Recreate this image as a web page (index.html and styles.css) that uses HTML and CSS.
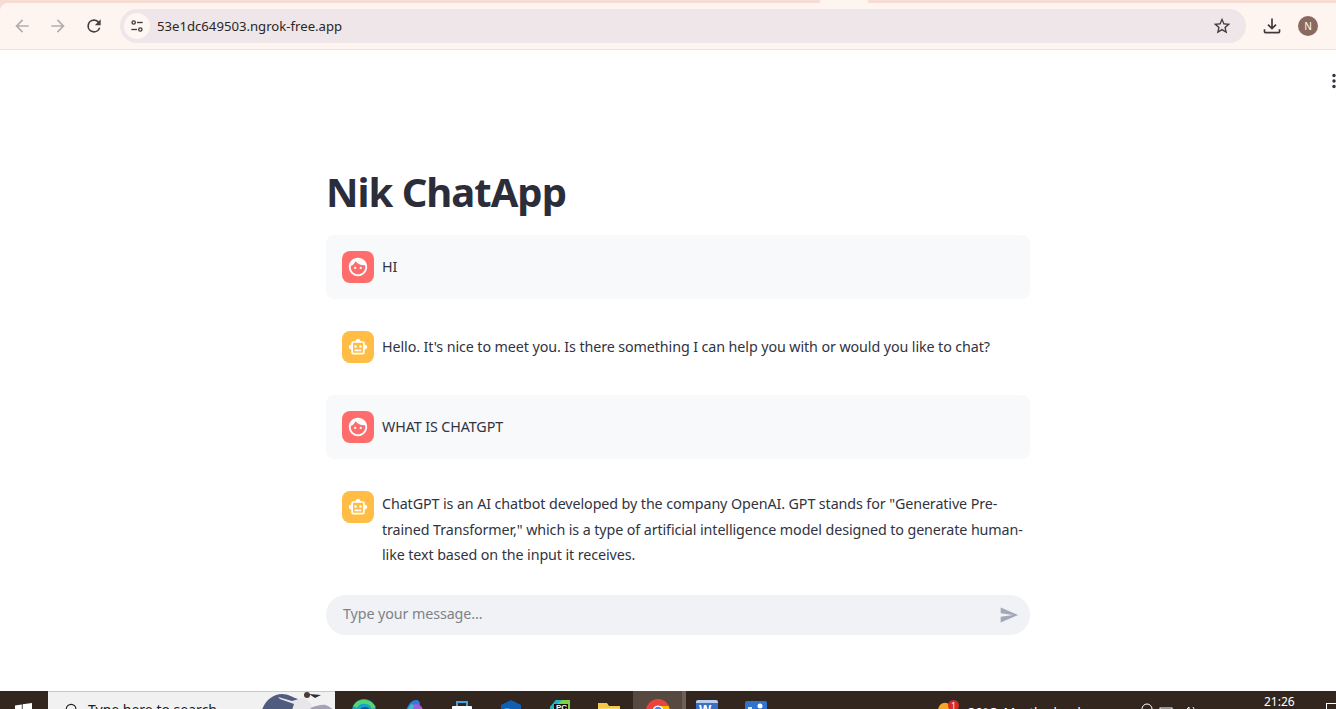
FILE: index.html
```html
<!DOCTYPE html>
<html lang="en">
<head>
<meta charset="utf-8">
<title>Nik ChatApp</title>
<link rel="stylesheet" href="styles.css">
</head>
<body>
<div class="chrome">
<div class="tabstrip"><div class="tab-active"></div></div>
<header class="toolbar">
  <svg class="nav-icon dim" viewBox="0 0 24 24"><path d="M20 11H7.830l5.590-5.590L12 4l-8 8 8 8 1.410-1.410L7.830 13H20z"/></svg>
  <svg class="nav-icon dim" viewBox="0 0 24 24"><path d="M4 11h12.170l-5.590-5.590L12 4l8 8-8 8-1.410-1.410L16.170 13H4z"/></svg>
  <svg class="nav-icon" viewBox="0 0 24 24"><path d="M17.650 6.350A7.960 7.960 0 0 0 12 4a8 8 0 1 0 7.730 10h-2.080A6 6 0 1 1 12 6c1.660 0 3.140.69 4.220 1.780L13 11h7V4z"/></svg>
  <div class="omnibox">
    <span class="site-chip">
      <svg viewBox="0 0 16 16" class="tune"><circle cx="4.200" cy="4" r="1.900"/><path d="M8 4h6.500"/><circle cx="11.800" cy="12" r="1.900"/><path d="M1.500 12H8"/></svg>
    </span>
    <span class="url">53e1dc649503.ngrok-free.app</span>
    <svg class="star" viewBox="0 0 24 24"><path d="M22 9.240l-7.190-.62L12 2 9.190 8.630 2 9.240l5.460 4.730L5.820 21 12 17.270 18.180 21l-1.630-7.030L22 9.240zM12 15.400l-3.760 2.270 1-4.280-3.320-2.880 4.380-.38L12 6.100l1.710 4.040 4.380.38-3.320 2.880 1 4.280L12 15.400z"/></svg>
  </div>
  <svg class="download" viewBox="0 0 24 24"><path d="M12 16.500l-5.500-5.500 1.400-1.400 3.100 3.100V3h2v9.700l3.100-3.100 1.400 1.400zM4 21a2 2 0 0 1-2-2v-3h2v3h16v-3h2v3a2 2 0 0 1-2 2z"/></svg>
  <span class="profile">N</span>
</header>
</div>

<main class="page">
  <svg class="kebab" viewBox="0 0 4 16"><circle cx="2" cy="2.500" r="1.700"/><circle cx="2" cy="8" r="1.700"/><circle cx="2" cy="13.500" r="1.700"/></svg>
  <div class="column">
    <h1 class="title">Nik ChatApp</h1>
    <div class="messages">
      <div class="msg msg-user">
        <span class="avatar avatar-user"><svg viewBox="0 0 24 24"><path d="M9 11.750c-.69 0-1.250.56-1.250 1.250s.56 1.250 1.250 1.250 1.250-.56 1.250-1.250-.56-1.250-1.250-1.250zm6 0c-.69 0-1.250.56-1.250 1.250s.56 1.250 1.250 1.250 1.250-.56 1.250-1.250-.56-1.250-1.250-1.250zM12 2C6.480 2 2 6.480 2 12s4.480 10 10 10 10-4.480 10-10S17.520 2 12 2zm0 18c-4.410 0-8-3.590-8-8 0-.29.02-.58.05-.86 2.360-1.050 4.230-2.980 5.210-5.370C11.070 8.330 14.050 10 17.420 10c.78 0 1.530-.09 2.250-.26.21.71.33 1.470.33 2.260 0 4.410-3.590 8-8 8z"/></svg></span>
        <p class="msg-text">HI</p>
      </div>
      <div class="msg">
        <span class="avatar avatar-bot"><svg viewBox="0 0 24 24"><path d="M20 9V7c0-1.100-.9-2-2-2h-3c0-1.660-1.340-3-3-3S9 3.340 9 5H6c-1.100 0-2 .9-2 2v2c-1.660 0-3 1.340-3 3s1.340 3 3 3v4c0 1.100.9 2 2 2h12c1.100 0 2-.9 2-2v-4c1.660 0 3-1.340 3-3s-1.340-3-3-3zm-2 10H6V7h12v12zm-9-6c-.83 0-1.500-.67-1.500-1.500S8.170 10 9 10s1.500.67 1.500 1.500S9.830 13 9 13zm7.500-1.500c0 .83-.67 1.500-1.500 1.500s-1.500-.67-1.500-1.500.67-1.500 1.500-1.500 1.500.67 1.500 1.500zM8 15h8v2H8v-2z"/></svg></span>
        <p class="msg-text">Hello. It's nice to meet you. Is there something I can help you with or would you like to chat?</p>
      </div>
      <div class="msg msg-user">
        <span class="avatar avatar-user"><svg viewBox="0 0 24 24"><path d="M9 11.750c-.69 0-1.250.56-1.250 1.250s.56 1.250 1.250 1.250 1.250-.56 1.250-1.250-.56-1.250-1.250-1.250zm6 0c-.69 0-1.250.56-1.250 1.250s.56 1.250 1.250 1.250 1.250-.56 1.250-1.250-.56-1.250-1.250-1.250zM12 2C6.480 2 2 6.480 2 12s4.480 10 10 10 10-4.480 10-10S17.520 2 12 2zm0 18c-4.410 0-8-3.590-8-8 0-.29.02-.58.05-.86 2.360-1.050 4.230-2.980 5.210-5.370C11.070 8.330 14.050 10 17.420 10c.78 0 1.530-.09 2.250-.26.21.71.33 1.470.33 2.260 0 4.410-3.590 8-8 8z"/></svg></span>
        <p class="msg-text">WHAT IS CHATGPT</p>
      </div>
      <div class="msg msg-long">
        <span class="avatar avatar-bot"><svg viewBox="0 0 24 24"><path d="M20 9V7c0-1.100-.9-2-2-2h-3c0-1.660-1.340-3-3-3S9 3.340 9 5H6c-1.100 0-2 .9-2 2v2c-1.660 0-3 1.340-3 3s1.340 3 3 3v4c0 1.100.9 2 2 2h12c1.100 0 2-.9 2-2v-4c1.660 0 3-1.340 3-3s-1.340-3-3-3zm-2 10H6V7h12v12zm-9-6c-.83 0-1.500-.67-1.500-1.500S8.170 10 9 10s1.500.67 1.500 1.500S9.830 13 9 13zm7.500-1.500c0 .83-.67 1.500-1.500 1.500s-1.500-.67-1.500-1.500.67-1.500 1.500-1.500 1.500.67 1.500 1.500zM8 15h8v2H8v-2z"/></svg></span>
        <p class="msg-text">ChatGPT is an AI chatbot developed by the company OpenAI. GPT stands for "Generative Pre-trained Transformer," which is a type of artificial intelligence model designed to generate human-like text based on the input it receives.</p>
      </div>
    </div>
    <div class="chat-input">
      <span class="placeholder">Type your message...</span>
      <svg class="send" viewBox="0 0 24 24"><path d="M2.010 21L23 12 2.010 3 2 10l15 2-15 2z"/></svg>
    </div>
  </div>
</main>

<footer class="taskbar">
  <svg class="win" viewBox="0 0 20 20"><path d="M0 3l8-1.200V9.500H0zM9 1.600L20 0v9.500H9zM0 10.500h8v7.700L0 17zM9 10.500h11V20L9 18.400z"/></svg>
  <div class="search">
    <svg class="lens" viewBox="0 0 16 16"><circle cx="7" cy="7" r="5.500"/><path d="M3 11.500L.8 15"/></svg>
    <span class="search-text">Type here to search</span>
    <svg class="search-art" viewBox="0 0 72 18"><path d="M0 18C3 8 12 2 20 2c6 0 10 3 16 5l6 11z" fill="#4f5c80"/><path d="M40 18C50 16 60 10 66 14l6 4z" fill="#a5a2b8"/><path d="M16 5l14 4 10-3 4 1 6 6-2 5H30l2-6-14-5z" fill="#e9e6ea"/><circle cx="45" cy="3" r="3" fill="#4a3a38"/><path d="M47 2l12 1-6 3z" fill="#2e2a33"/></svg>
  </div>
  <div class="apps">
    <span class="app"><svg viewBox="0 0 24 24"><circle cx="12" cy="12" r="12" fill="#1aa3c8"/><circle cx="13" cy="15" r="7" fill="#0c5aa6"/><path d="M3 8C7 1 18 1 22 9" stroke="#58d66c" stroke-width="4" fill="none"/></svg></span>
    <span class="app"><svg viewBox="0 0 24 24"><path d="M4 20C4 8 10 1 15 1c3 0 4 2 4 5l-4 4z" fill="#2a7de1"/><circle cx="15" cy="12" r="7" fill="#a55cd6"/><path d="M4 14c4 0 6-6 8-8" stroke="#35c0c5" stroke-width="4" fill="none"/></svg></span>
    <span class="app app-low"><svg viewBox="0 0 24 24"><path d="M7 6V2h10v4" stroke="#3ea6e0" stroke-width="2" fill="none"/><rect x="2" y="6" width="20" height="18" rx="1" fill="#fff"/><rect x="6" y="11" width="5" height="5" fill="#2f7fd6"/></svg></span>
    <span class="app app-low"><svg viewBox="0 0 24 24"><path d="M12 0l10 5v14H2V5z" fill="#0f5fb5"/><circle cx="8" cy="13" r="5" fill="#38a4e8"/></svg></span>
    <span class="app"><svg viewBox="0 0 24 24"><path d="M4 6L8 1h14v22H2V8z" fill="#7bd14a"/><path d="M2 24V8l6-7h6L2 12z" fill="#1db6c9"/><rect x="6" y="5" width="14" height="16" fill="#111"/><text x="8" y="11" class="mini">PC</text></svg></span>
    <span class="app app-lower"><svg viewBox="0 0 24 24"><path d="M1 1h9l2 3h11v20H1z" fill="#f6c744"/><rect x="1" y="6" width="22" height="18" fill="#fbd766"/></svg></span>
    <span class="app app-active"><svg viewBox="0 0 24 24"><circle cx="12" cy="12" r="12" fill="#e8453c"/><path d="M1.500 12A12 12 0 0 0 12 24L18 12z" fill="#34a853"/><path d="M12 24A12 12 0 0 0 22.500 7H12l6 6z" fill="#fbbc05"/><circle cx="12" cy="12" r="5.500" fill="#fff"/><circle cx="12" cy="12" r="4.200" fill="#4285f4"/></svg></span>
    <span class="app"><svg viewBox="0 0 24 24"><rect x="1" y="1" width="22" height="22" rx="2" fill="#b9cdf0"/><rect x="1" y="4" width="22" height="20" fill="#3a6fc4"/><text x="4" y="15" class="mini-w">W</text></svg></span>
    <span class="app app-low"><svg viewBox="0 0 24 24"><rect x="1" y="1" width="22" height="22" rx="2" fill="#2f73d1"/><circle cx="16" cy="6" r="2.500" fill="#fff"/><rect x="4" y="7" width="4" height="2" fill="#d8e6fa"/></svg></span>
  </div>
  <div class="tray">
    <span class="weather">
      <svg class="sun" viewBox="0 0 24 24"><circle cx="12" cy="14" r="9" fill="#f5a623"/><circle cx="19" cy="20" r="6" fill="#8b9fc0"/></svg>
      <span class="badge">1</span>
    </span>
    <span class="weather-text">30°C&nbsp;&nbsp;Mostly cloudy</span>
    <svg class="tray-icon chevron" viewBox="0 0 14 14"><path d="M3 7l4-4 4 4"/></svg>
    <svg class="tray-icon network" viewBox="0 0 14 14"><circle cx="7" cy="7" r="5"/><path d="M3 12h8"/></svg>
    <svg class="tray-icon battery" viewBox="0 0 14 14"><rect x="1" y="1" width="12" height="9"/></svg>
    <svg class="tray-icon volume" viewBox="0 0 16 14"><path d="M1 6h3l4-4v12M10 4c1 2 1 4 0 6M12 2c2 3 2 7 0 10"/></svg>
    <span class="lang">ENG</span>
    <span class="clock">21:26</span>
    <span class="notify"></span>
  </div>
</footer>
</body>
</html>
```
FILE: styles.css
```css
* { box-sizing: border-box; }
html, body { height: 100%; }
body {
  margin: 0;
  height: 709px;
  overflow: hidden;
  display: flex;
  flex-direction: column;
  background: #fff;
  font-family: "Noto Sans", "Open Sans", sans-serif;
  color: #31333f;
}

/* Browser chrome */
.chrome { flex: none; background: #f6dcd3; }
.tabstrip { height: 3px; position: relative; }
.tab-active {
  position: absolute;
  left: 820px;
  top: 0;
  width: 48px;
  height: 3px;
  background: #fef5f0;
}
.toolbar {
  height: 47px;
  display: flex;
  align-items: flex-start;
  background: #fef5f0;
  border-bottom: 1px solid #e9e3df;
  border-top-left-radius: 8px;
  padding: 6px 0 0 12px;
}
.nav-icon { width: 20px; height: 20px; margin: 7px 16px 0 0; fill: #43403f; flex: none; }
.nav-icon.dim { fill: #b1aeac; }
.omnibox {
  width: 1126px;
  height: 34px;
  flex: none;
  border-radius: 17px;
  background: #eee6e8;
  display: flex;
  align-items: center;
  padding: 0 14px 0 4px;
}
.site-chip {
  width: 26px;
  height: 26px;
  border-radius: 50%;
  background: #fdf6f3;
  display: flex;
  align-items: center;
  justify-content: center;
  flex: none;
}
.tune { width: 14px; height: 14px; fill: none; stroke: #3d3a3a; stroke-width: 1.500; }
.url {
  margin-left: 7px;
  flex: 1;
  font-family: "Noto Sans", sans-serif;
  font-size: 13.150px;
  color: #2a2727;
}
.star { width: 20px; height: 20px; fill: #3f3b3b; flex: none; }
.download { width: 20px; height: 20px; margin: 7px 0 0 16px; fill: #43393a; flex: none; }
.profile {
  width: 20px;
  height: 20px;
  margin: 7px 0 0 16px;
  border-radius: 50%;
  background: #8a6a5e;
  color: #fff;
  font-family: "Liberation Sans", sans-serif;
  font-size: 10px;
  display: flex;
  align-items: center;
  justify-content: center;
  flex: none;
}

/* Page */
.page {
  flex: 1;
  position: relative;
  min-height: 0;
  overflow: hidden;
  padding: 0 306px 0 326px;
}
.kebab { position: absolute; right: 0; top: 23px; width: 4px; height: 16px; fill: #31333f; }
.column { display: flex; flex-direction: column; width: 704px; }
.title {
  margin: 113px 0 14px 0;
  font-size: 40px;
  line-height: 58px;
  font-weight: 700;
  letter-spacing: -1px;
  color: #2b2d3a;
}
.messages { display: flex; flex-direction: column; gap: 16px; }
.msg {
  display: flex;
  gap: 8px;
  padding: 16px 4px 16px 16px;
  min-height: 64px;
  border-radius: 8px;
}
.msg-long { padding-bottom: 12px; }
.msg-user { background: #f8f9fb; }
.avatar {
  width: 32px;
  height: 32px;
  border-radius: 8px;
  display: flex;
  align-items: center;
  justify-content: center;
  flex: none;
}
.avatar svg { width: 20px; height: 20px; fill: #fff; }
.avatar-user { background: #ff6c6c; }
.avatar-user svg { width: 22px; height: 22px; }
.avatar-bot { background: #ffbd45; }
.msg-text {
  margin: 0;
  flex: 1;
  font-size: 14.300px;
  letter-spacing: -0.100px;
  line-height: 25.600px;
  min-height: 32px;
  padding-top: 3px;
  color: #31333f;
}
.msg-long .msg-text { padding-top: 0; }
.chat-input {
  margin-top: 15px;
  height: 40px;
  border-radius: 20px;
  background: #f0f2f6;
  display: flex;
  align-items: center;
  justify-content: space-between;
  padding: 0 11px 0 17px;
}
.placeholder { font-size: 14.300px; letter-spacing: -0.100px; padding-bottom: 2px; color: #7f8189; }
.send { width: 20px; height: 20px; fill: #a3a8b8; }

/* Taskbar, cut off by the bottom of the window */
.taskbar {
  height: 18px;
  flex: none;
  display: flex;
  align-items: flex-start;
  overflow: hidden;
  background: #33261f;
  color: #fff;
  font-family: "Noto Sans", sans-serif;
}
.win { width: 17px; height: 17px; margin: 12px 0 0 15px; fill: #fff; flex: none; }
.search {
  width: 287px;
  height: 18px;
  margin-left: 16px;
  flex: none;
  display: flex;
  align-items: flex-start;
  background: #f1f1f1;
  border-top: 1px solid #c8c8c8;
  color: #202020;
  position: relative;
  overflow: hidden;
}
.lens { width: 14px; height: 14px; margin: 11px 0 0 17px; fill: none; stroke: #202020; stroke-width: 1.300; flex: none; }
.search-text { margin: 8px 0 0 9px; font-size: 14px; line-height: 20px; white-space: nowrap; }
.search-art { position: absolute; right: 1px; top: 0; width: 72px; height: 18px; }
.apps { display: flex; flex: none; margin-left: 4px; }
.app {
  width: 49px;
  height: 18px;
  flex: none;
  display: flex;
  justify-content: center;
  padding-top: 8px;
}
.app-low { padding-top: 9px; }
.app-lower { padding-top: 11px; }
.app svg { width: 24px; height: 24px; flex: none; }
.app-active { background: #57493f; box-shadow: 4px 0 0 #6c5f56; }
.mini { font-size: 8px; font-weight: 700; fill: #fff; font-family: "Liberation Sans", sans-serif; }
.mini-w { font-size: 13px; font-weight: 700; fill: #fff; font-family: "Liberation Sans", sans-serif; }
.tray {
  flex: 1;
  display: flex;
  align-items: flex-start;
  position: relative;
  font-size: 13px;
}
.weather { position: relative; width: 24px; height: 18px; margin-left: 156px; flex: none; }
.sun { position: absolute; left: 0; top: 8px; width: 18px; height: 18px; }
.badge {
  position: absolute;
  left: 12px;
  top: 9px;
  width: 11px;
  height: 11px;
  border-radius: 50%;
  background: #d3292b;
  color: #fff;
  font-size: 8px;
  line-height: 11px;
  text-align: center;
}
.weather-text { width: 147px; margin: 12px 0 0 8px; white-space: nowrap; line-height: 18px; flex: none; }
.tray-icon { height: 14px; fill: none; stroke: #fff; stroke-width: 1; flex: none; }
.chevron { width: 14px; margin-top: 15px; }
.network { width: 14px; margin: 11px 0 0 11px; }
.battery { width: 14px; margin: 16px 0 0 5px; }
.volume { width: 16px; margin: 14px 0 0 8px; }
.lang { margin: 13px 0 0 10px; font-size: 11px; line-height: 18px; flex: none; }
.clock { position: absolute; left: 484px; top: 2px; font-size: 12px; line-height: 18px; }
.notify { position: absolute; left: 546px; top: 12px; width: 14px; height: 12px; border: 1px solid #fff; }
```
